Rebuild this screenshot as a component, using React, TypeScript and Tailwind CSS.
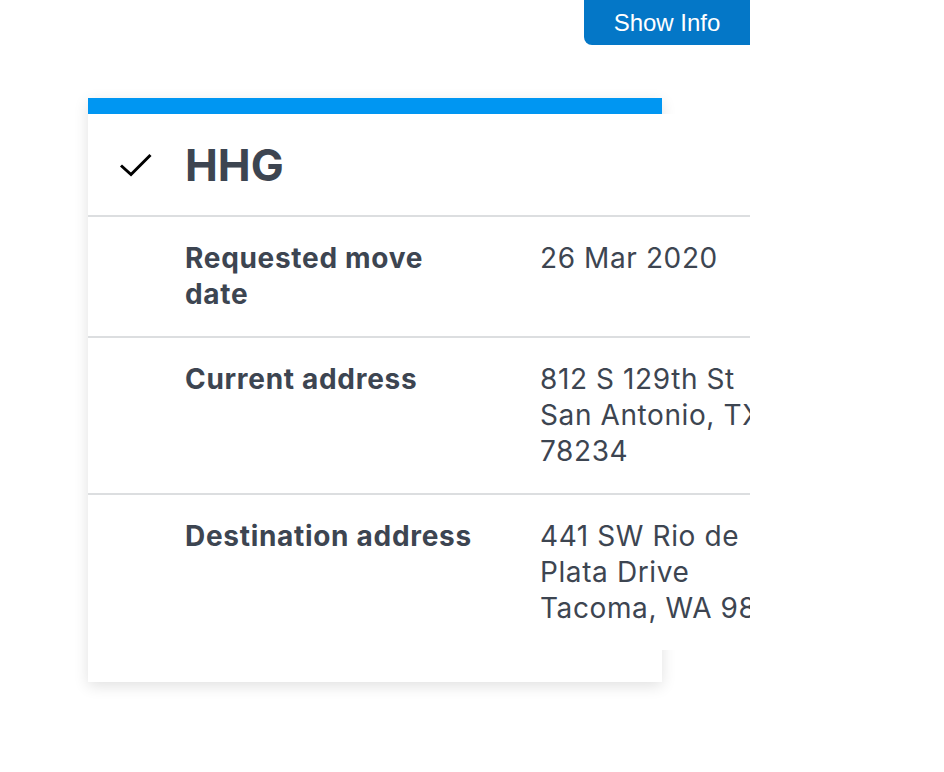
const rows = [
  { label: ['Requested move', 'date'], value: ['26 Mar 2020'] },
  { label: ['Current address'], value: ['812 S 129th St', 'San Antonio, TX', '78234'] },
  { label: ['Destination address'], value: ['441 SW Rio de', 'Plata Drive', 'Tacoma, WA 98421'] },
];

const CheckIcon = () => (
  <svg width="34" height="26" viewBox="0 0 34 26" fill="none">
    <path d="M2 12.5 L12 21.5 L31.5 2" stroke="#000" strokeWidth="3" />
  </svg>
);

/**
 * Shipment summary card (HHG)
 */
const App = () => {
  return (
    <div className='w-[750px] h-[772px] overflow-hidden bg-white font-["Inter",sans-serif] text-[#3d4551]'>
      <div className="flex justify-end">
        <button className='w-[166px] h-[45px] rounded-bl-[8px] bg-[#0477c7] text-white text-[24px] font-["Liberation_Sans",Arial,sans-serif]'>
          Show Info
        </button>
      </div>

      <div className="ml-[88px] mt-[53px] w-[574px] bg-white border-t-[16px] border-[#0096f2] pb-8 shadow-[0_4px_14px_rgba(0,0,0,0.12)]">
        <div className="w-[700px] bg-white">
          <div className="h-[101px] flex items-center">
            <div className="w-[97px] flex justify-end pr-[32px] pt-[2px]">
              <CheckIcon />
            </div>
            <h2 className="text-[44px] font-bold leading-none">HHG</h2>
          </div>

          {rows.map((row) => (
            <div key={row.label.join(' ')} className="flex border-t-2 border-[#dcdee0] pt-[23px] pb-[24px] text-[28px] leading-[36px]">
              <div className="w-[97px] shrink-0" />
              <div className="w-[355px] shrink-0 font-bold tracking-[0.7px]">
                {row.label.map((line) => (
                  <div key={line}>{line}</div>
                ))}
              </div>
              <div className="w-[300px] shrink-0 whitespace-nowrap tracking-[0.6px]">
                {row.value.map((line) => (
                  <div key={line}>{line}</div>
                ))}
              </div>
            </div>
          ))}
        </div>
      </div>
    </div>
  );
};

export default App;
